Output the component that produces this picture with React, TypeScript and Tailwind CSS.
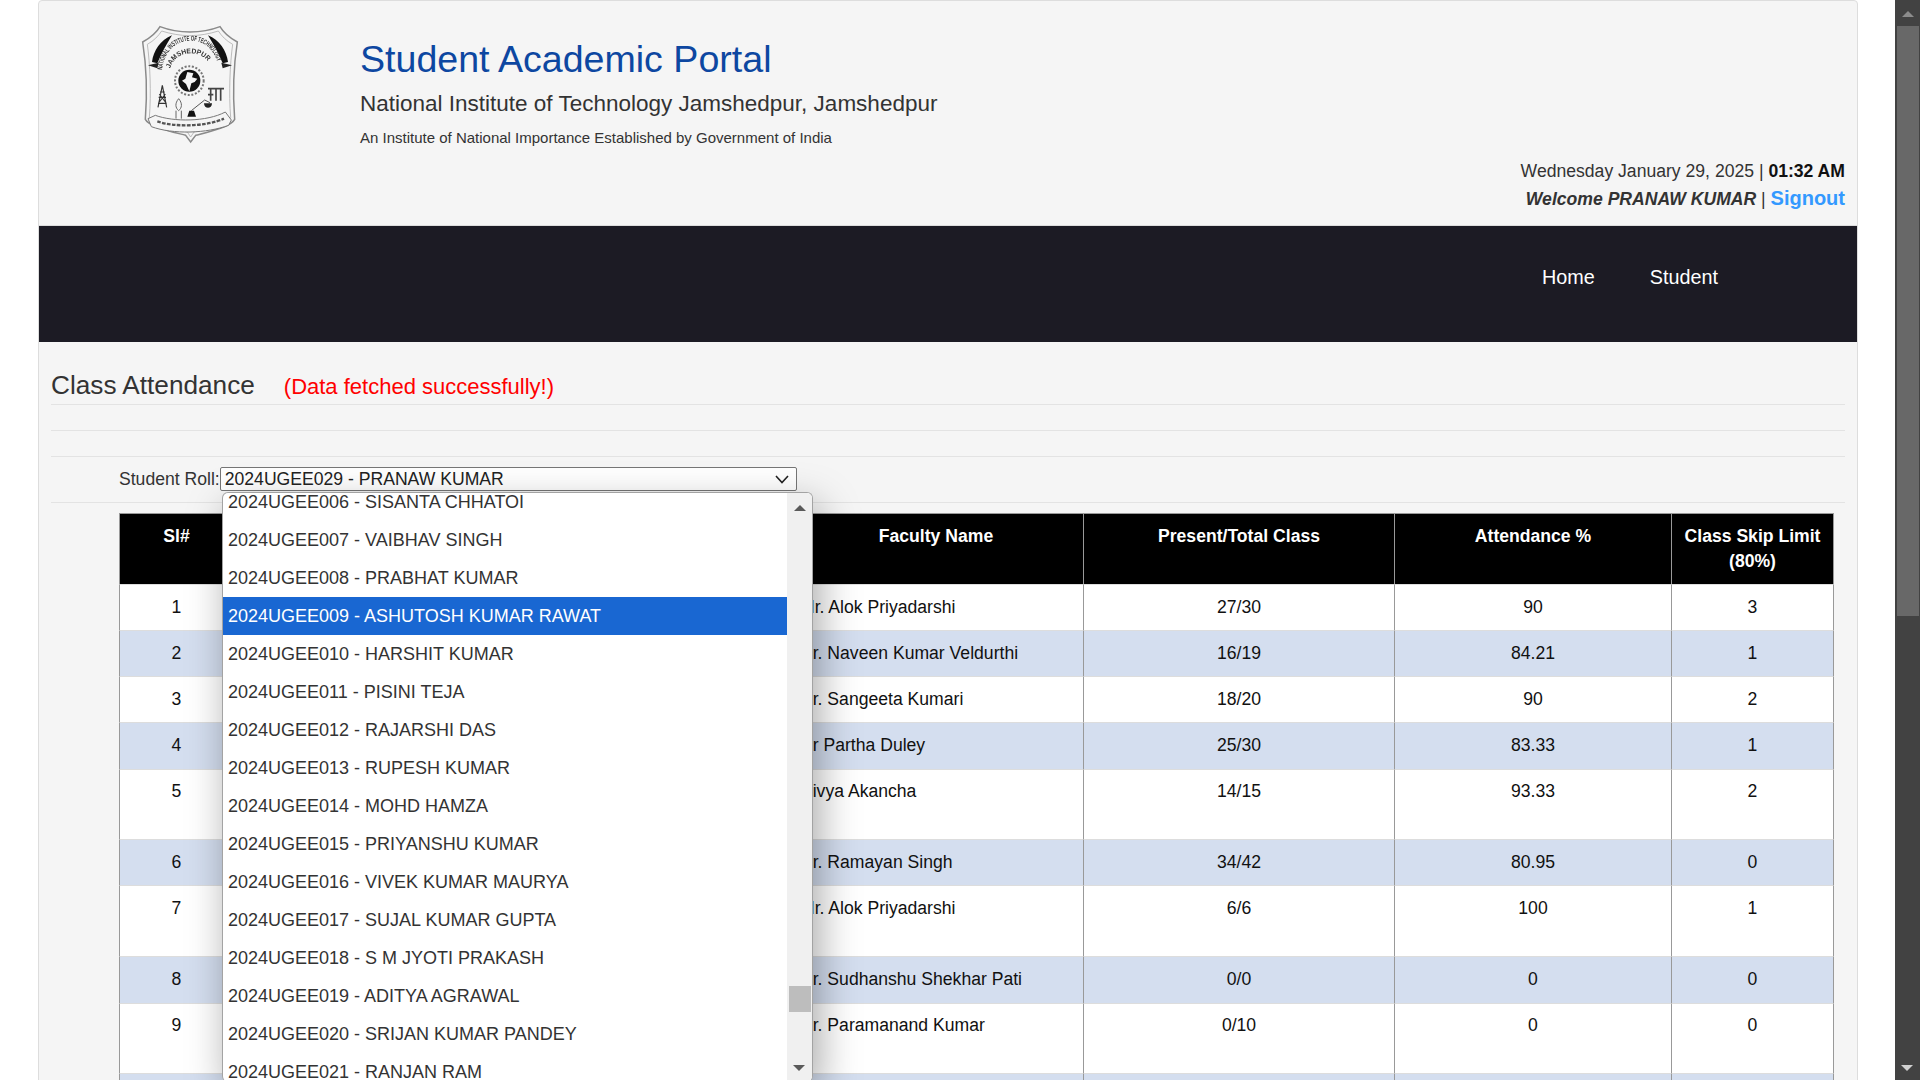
import React from "react";

const rows = [
  { n: "1", f: "Mr. Alok Priyadarshi", p: "27/30", a: "90", s: "3", h: "h-[46px]", t: "pt-[10px]" },
  { n: "2", f: "Dr. Naveen Kumar Veldurthi", p: "16/19", a: "84.21", s: "1", h: "h-[46px]", t: "pt-[10px]" },
  { n: "3", f: "Dr. Sangeeta Kumari", p: "18/20", a: "90", s: "2", h: "h-[46px]", t: "pt-[10px]" },
  { n: "4", f: "Dr Partha Duley", p: "25/30", a: "83.33", s: "1", h: "h-[47px]", t: "pt-[10px]" },
  { n: "5", f: "Divya Akancha", p: "14/15", a: "93.33", s: "2", h: "h-[70px]", t: "pt-[9px]" },
  { n: "6", f: "Dr. Ramayan Singh", p: "34/42", a: "80.95", s: "0", h: "h-[46px]", t: "pt-[10px]" },
  { n: "7", f: "Mr. Alok Priyadarshi", p: "6/6", a: "100", s: "1", h: "h-[71px]", t: "pt-[10px]" },
  { n: "8", f: "Dr. Sudhanshu Shekhar Pati", p: "0/0", a: "0", s: "0", h: "h-[47px]", t: "pt-[10px]" },
  { n: "9", f: "Dr. Paramanand Kumar", p: "0/10", a: "0", s: "0", h: "h-[70px]", t: "pt-[9px]" },
  { n: "", f: "", p: "", a: "", s: "", h: "h-[46px]", t: "pt-[10px]" },
];

const options = [
  "2024UGEE006 - SISANTA CHHATOI",
  "2024UGEE007 - VAIBHAV SINGH",
  "2024UGEE008 - PRABHAT KUMAR",
  "2024UGEE009 - ASHUTOSH KUMAR RAWAT",
  "2024UGEE010 - HARSHIT KUMAR",
  "2024UGEE011 - PISINI TEJA",
  "2024UGEE012 - RAJARSHI DAS",
  "2024UGEE013 - RUPESH KUMAR",
  "2024UGEE014 - MOHD HAMZA",
  "2024UGEE015 - PRIYANSHU KUMAR",
  "2024UGEE016 - VIVEK KUMAR MAURYA",
  "2024UGEE017 - SUJAL KUMAR GUPTA",
  "2024UGEE018 - S M JYOTI PRAKASH",
  "2024UGEE019 - ADITYA AGRAWAL",
  "2024UGEE020 - SRIJAN KUMAR PANDEY",
  "2024UGEE021 - RANJAN RAM",
];

function Logo() {
  return (
    <svg viewBox="0 0 360 390" className="w-[120px] h-[130px] blur-[0.6px]" fill="none">
      <path d="M180 36 C150 36 116 30 90 20 C80 37 64 52 38 66 C48 130 52 220 46 298 C56 320 130 336 167 346 L182 366 L197 346 C234 336 304 320 314 298 C308 220 312 130 322 66 C296 52 280 37 270 20 C244 30 210 36 180 36 Z" stroke="#8a8a8a" strokeWidth="4.5" />
      <path d="M180 47 C150 47 120 41 95 33 C85 48 72 62 52 73 C60 130 64 220 58 293 C70 311 136 326 172 336 L182 351 L192 336 C228 326 292 311 302 293 C296 220 300 130 308 73 C288 62 275 48 265 33 C240 41 210 47 180 47 Z" stroke="#b0b0b0" strokeWidth="2.5" />
      <path d="M66 126 C70 92 92 60 126 46 C110 72 94 100 82 130 Z" fill="#111" />
      <path d="M294 126 C290 92 268 60 234 46 C250 72 266 100 278 130 Z" fill="#111" />
      <path d="M54 136 L86 128 L82 145 Z" fill="#222" />
      <path d="M306 136 L274 128 L278 145 Z" fill="#222" />
      <defs>
        <path id="outerArc" d="M96 150 C104 90 140 62 182 62 C224 62 258 90 268 150" />
        <path id="innerArc" d="M120 146 C130 116 152 100 182 100 C212 100 234 116 246 146" />
      </defs>
      <text fontFamily="Liberation Sans, sans-serif" fontSize="21" fontWeight="700" fill="#333">
        <textPath href="#outerArc" startOffset="0" textLength="245" lengthAdjust="spacingAndGlyphs">NATIONAL INSTITUTE OF TECHNOLOGY</textPath>
      </text>
      <text fontFamily="Liberation Sans, sans-serif" fontSize="21" fontWeight="700" fill="#333">
        <textPath href="#innerArc" startOffset="0" textLength="142" lengthAdjust="spacingAndGlyphs">JAMSHEDPUR</textPath>
      </text>
      <circle cx="178" cy="182" r="43" stroke="#777" strokeWidth="6" strokeDasharray="6 5" />
      <circle cx="178" cy="182" r="33" fill="#111" />
      <path d="M172 156 L190 160 L186 172 L202 176 L194 186 L184 190 L178 214 L168 192 L156 182 L166 176 Z" fill="#f5f5f5" />
      <path d="M97 196 L84 262 M97 196 L110 262 M90 216 H104 M86 232 H108 M84 250 H110 M88 222 L106 246 M106 222 L88 246" stroke="#333" strokeWidth="3.5" />
      <path d="M234 206 H282 M242 206 V242 M258 206 V242 M272 206 V242 M234 224 H250" stroke="#444" strokeWidth="5" />
      <path d="M146 236 C134 250 136 264 146 272 C156 264 158 250 146 236 Z M138 272 V296 M154 272 V296" stroke="#666" strokeWidth="3" />
      <path d="M172 290 L178 272 H192 L198 290 Z" fill="#111" />
      <path d="M184 272 L224 240 L240 248" stroke="#555" strokeWidth="3" />
      <path d="M222 250 C222 268 246 268 246 250 Z" fill="#222" />
      <path d="M54 296 L76 286 C130 306 230 306 286 276 L304 300 L296 316 C230 340 130 344 64 320 Z" fill="#f5f5f5" stroke="#777" strokeWidth="3" />
      <path d="M82 304 C130 322 230 320 282 296" stroke="#555" strokeWidth="7" strokeDasharray="11 4" />
    </svg>
  );
}

export default function App() {
  return (
    <div className="flex h-screen overflow-hidden bg-white text-[#333] font-['Liberation_Sans',Arial,sans-serif]">
      <div className="flex-1 min-w-0 pl-[38px] pr-[37px]">
        <div className="h-[1200px] bg-[#f5f5f5] border border-[#ddd] rounded-t-[4px]">
          {/* header */}
          <div className="h-[225px] flex relative border-b border-[#ddd]">
            <div className="w-[321px] shrink-0 pl-[91px] pt-[19px]">
              <Logo />
            </div>
            <div className="flex-1 min-w-0 flex flex-col">
              <div className="text-[37.6px] leading-[44px] text-[#0d47a1] mt-[36px]">Student Academic Portal</div>
              <div className="text-[22.5px] leading-[30px] text-[#333] mt-[8px]">National Institute of Technology Jamshedpur, Jamshedpur</div>
              <div className="text-[15px] leading-[20px] text-[#333] mt-[9px]">An Institute of National Importance Established by Government of India</div>
              <div className="self-end pr-[12px] text-right mt-[11px]">
                <div className="text-[17.6px] leading-[25px]">
                  Wednesday January 29, 2025 | <b className="text-[#111]">01:32 AM</b>
                </div>
                <div className="text-[17.6px] leading-[28px]">
                  <b className="italic">Welcome PRANAW KUMAR</b> | <b className="text-[20px] text-[#3399ff]">Signout</b>
                </div>
              </div>
            </div>
          </div>
          {/* nav */}
          <nav className="h-[116px] bg-[#1c1b24] flex justify-end items-center gap-[55px] pr-[139px] pb-[12px] text-[19.8px] text-white">
            <span>Home</span>
            <span>Student</span>
          </nav>
          {/* content */}
          <div className="px-[12px]">
            <div className="h-[63px] flex items-end gap-[29px] border-b border-[#e3e3e3] pb-[2px]">
              <span className="text-[26.2px] leading-[34px] text-[#333]">Class Attendance</span>
              <span className="text-[22px] leading-[32px] text-[#ff0000] relative top-[1px]">(Data fetched successfully!)</span>
            </div>
            <div className="h-[26px] border-b border-[#e3e3e3]" />
            <div className="h-[26px] border-b border-[#e3e3e3]" />
            <div className="h-[46px] border-b border-[#e3e3e3] pl-[68px] pt-[10px] flex items-start relative">
              <label className="text-[17.6px] leading-[24px] text-[#333]">Student Roll:</label>
              <div className="relative w-[577px] h-[24px] shrink-0">
                <select className="w-full h-full bg-white border border-[#767676] rounded-[2px] text-[17.6px] leading-[20px] text-[#222] font-['Liberation_Sans',Arial,sans-serif] pl-[4px] appearance-none">
                  <option>2024UGEE029 - PRANAW KUMAR</option>
                </select>
                <svg width="14" height="9" viewBox="0 0 14 9" fill="none" className="absolute right-[8px] top-[8px] pointer-events-none">
                  <path d="M1 1 L7 7.5 L13 1" stroke="#222" strokeWidth="1.6" />
                </svg>
              </div>
              {/* open dropdown list */}
              <div className="absolute z-10 left-[171px] top-[35px] w-[591px] h-[590px] bg-white border border-b-0 border-[#a3a3a3] rounded-[6px] shadow-[6px_14px_40px_rgba(0,0,0,0.35)] overflow-hidden flex">
                <div className="flex-1 min-w-0 -mt-[10px]">
                  {options.map((o, i) => (
                    <div
                      key={o}
                      className={
                        "h-[38px] flex items-center pl-[5px] text-[18px] " +
                        (i === 3 ? "bg-[#1967d2] text-white" : "text-[#333]")
                      }
                    >
                      {o}
                    </div>
                  ))}
                </div>
                <div className="w-[25px] shrink-0 bg-[#f0f0f0] flex flex-col items-center relative">
                  <svg width="12" height="6" viewBox="0 0 12 6" className="mt-[12px]"><path d="M6 0 L12 6 H0 Z" fill="#5a5a5a" /></svg>
                  <div className="absolute left-[2px] top-[493px] w-[22px] h-[26px] bg-[#bdbdbd]" />
                  <svg width="12" height="6" viewBox="0 0 12 6" className="absolute bottom-[11px] left-[6px]"><path d="M6 6 L12 0 H0 Z" fill="#5a5a5a" /></svg>
                </div>
              </div>
            </div>
            <div className="pl-[68px] pr-[11px] pt-[10px]">
              <table className="w-[1715px] table-fixed border-separate border-spacing-0 text-[17.6px] leading-[25px] text-[#111]">
                <colgroup>
                  <col className="w-[114px]" />
                  <col className="w-[200px]" />
                  <col className="w-[355px]" />
                  <col className="w-[295px]" />
                  <col className="w-[311px]" />
                  <col className="w-[277px]" />
                  <col className="w-[163px]" />
                </colgroup>
                <thead>
                  <tr className="bg-black text-white font-bold align-top">
                    <th className="h-[71px] p-[10px] border-t border-l border-[#999]">Sl#</th>
                    <th className="p-[10px] border-t border-l border-[#999]"></th>
                    <th className="p-[10px] border-t border-l border-[#999]"></th>
                    <th className="p-[10px] border-t border-l border-[#999]">Faculty Name</th>
                    <th className="p-[10px] border-t border-l border-[#999]">Present/Total Class</th>
                    <th className="p-[10px] border-t border-l border-[#999]">Attendance %</th>
                    <th className="p-[10px] border-t border-x border-[#999]">Class Skip Limit (80%)</th>
                  </tr>
                </thead>
                <tbody>
                  {rows.map((r, i) => (
                    <tr key={i} className={"align-top " + (i % 2 === 0 ? "bg-white" : "bg-[#d4deef]")}>
                      <td className={r.h + " " + r.t + " px-[10px] text-center border-t border-t-[#ddd] border-l border-l-[#999]"}>{r.n}</td>
                      <td className="border-t border-t-[#ddd] border-l border-l-[#999]"></td>
                      <td className="border-t border-t-[#ddd] border-l border-l-[#999]"></td>
                      <td className={r.t + " pl-[11px] pr-[10px] border-t border-t-[#ddd] border-l border-l-[#999]"}>{r.f}</td>
                      <td className={r.t + " px-[10px] text-center border-t border-t-[#ddd] border-l border-l-[#999]"}>{r.p}</td>
                      <td className={r.t + " px-[10px] text-center border-t border-t-[#ddd] border-l border-l-[#999]"}>{r.a}</td>
                      <td className={r.t + " px-[10px] text-center border-t border-t-[#ddd] border-x border-x-[#999]"}>{r.s}</td>
                    </tr>
                  ))}
                </tbody>
              </table>
            </div>
          </div>
        </div>
      </div>
      {/* page scrollbar */}
      <div className="w-[25px] shrink-0 bg-[#424242] flex flex-col items-center relative">
        <svg width="12" height="6" viewBox="0 0 12 6" className="mt-[11px]"><path d="M6 0 L12 6 H0 Z" fill="#8c8c8c" /></svg>
        <div className="absolute left-[2px] top-[26px] w-[22px] h-[590px] bg-[#686868]" />
        <svg width="12" height="6" viewBox="0 0 12 6" className="absolute bottom-[9px] left-[6px]"><path d="M6 6 L12 0 H0 Z" fill="#d0d0d0" /></svg>
      </div>
    </div>
  );
}
